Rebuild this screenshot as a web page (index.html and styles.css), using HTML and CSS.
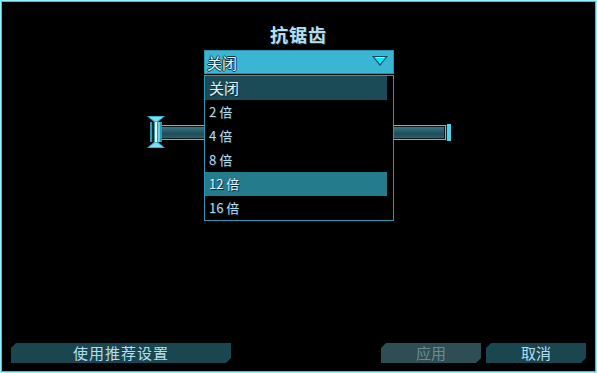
FILE: index.html
```html
<!DOCTYPE html>
<html lang="zh-CN">

<head>
    <meta charset="UTF-8">
    <title>抗锯齿</title>
    <link rel="stylesheet" href="styles.css">
</head>

<body>
    <div class="screen">
        <h1 class="title">抗锯齿</h1>

        <div class="select-wrap">
            <div class="select">
                <span>关闭</span>
                <svg class="arrow" width="18" height="12" viewBox="0 0 18 12">
                    <polygon points="1,1 17,1 9,11" fill="#0a4a5a" />
                    <polygon points="3,2 15,2 9,9" fill="#00eaff" />
                    <polygon points="4,2 14,2 13,3 5,3" fill="#8ff6ff" />
                </svg>
            </div>
            <ul class="options">
                <li class="current">关闭</li>
                <li>2 倍</li>
                <li>4 倍</li>
                <li>8 倍</li>
                <li class="hover">12 倍</li>
                <li>16 倍</li>
            </ul>
        </div>

        <!-- slider sits behind the open list -->
        <div class="slider">
            <div class="thumb">
                <svg width="18" height="32" viewBox="0 0 18 32">
                    <polygon points="0,0 18,0 11,6 7,6" fill="#3ab0cc" />
                    <polygon points="2,1 16,1 10,5 8,5" fill="#7fe0f4" />
                    <polygon points="0,32 18,32 11,26 7,26" fill="#3ab0cc" />
                    <polygon points="2,31 16,31 10,27 8,27" fill="#7fe0f4" />
                    <rect x="3" y="6" width="12" height="20" fill="#2a9ab8" />
                    <rect x="5" y="6" width="2" height="20" fill="#0a2a30" />
                    <rect x="8" y="6" width="2" height="20" fill="#ffffff" />
                    <rect x="11" y="6" width="2" height="20" fill="#5ad0ea" />
                </svg>
            </div>
            <div class="track"></div>
            <div class="cap"></div>
        </div>

        <div class="spacer"></div>

        <div class="footer">
            <button class="btn wide">使用推荐设置</button>
            <div class="right">
                <button class="btn disabled">应用</button>
                <button class="btn">取消</button>
            </div>
        </div>
    </div>
</body>

</html>
```

FILE: styles.css
```css
body {
    margin: 0;
    background-color: #000;
    font-family: "Noto Sans CJK SC", "Noto Sans", sans-serif;
}

.screen {
    width: 597px;
    height: 373px;
    box-sizing: border-box;
    border: 1px solid #8ef2ff;
    box-shadow: inset 0 0 0 1px #2cc6ee;
    background-color: #000;
    display: flex;
    flex-direction: column;
    padding: 22px 10px 9px 10px;
}

.title {
    margin: 0;
    text-align: center;
    font-size: 18px;
    line-height: 22px;
    letter-spacing: 1px;
    font-weight: bold;
    color: #b6def0;
    text-shadow: 1px 1px 0 #1a3a48;
}

.select-wrap {
    position: relative;
    width: 190px;
    margin: 5px auto 0 auto;
    padding-left: 1px;
}

.select {
    height: 24px;
    box-sizing: border-box;
    background-color: #3ab6d2;
    border: 1px solid #2894b0;
    display: flex;
    align-items: center;
    justify-content: space-between;
    padding: 0 4px 0 2px;
    color: #e8f6ff;
    font-size: 15px;
    text-shadow: 1px 0 0 #0c3440, -1px 0 0 #0c3440, 0 1px 0 #0c3440, 0 -1px 0 #0c3440;
}

.arrow {
    margin-top: -2px;
}

.options {
    position: absolute;
    left: 1px;
    top: 25px;
    width: 190px;
    box-sizing: border-box;
    margin: 0;
    padding: 0 6px 0 0;
    list-style: none;
    background-color: #000;
    border: 1px solid #2a9ab2;
    z-index: 2;
}

.options li {
    height: 24px;
    line-height: 24px;
    padding-left: 4px;
    font-size: 13px;
    color: #b6def0;
    text-shadow: 1px 1px 0 #0c2c34;
}

.options .current {
    background-color: #1a4b57;
    font-size: 15px;
    color: #e0f2fa;
}

.options .hover {
    background-color: #237b8c;
    color: #e0f2fa;
}

.slider {
    width: 304px;
    height: 32px;
    margin: 42px auto 0 auto;
    display: flex;
    align-items: center;
}

.thumb {
    width: 18px;
    height: 32px;
    margin-right: -9px;
    z-index: 1;
}

.thumb svg {
    display: block;
}

.track {
    flex: 1;
    height: 15px;
    box-sizing: border-box;
    border: 1px solid #45c8e6;
    box-shadow: inset 0 0 0 1px #0a1a1e;
    background: linear-gradient(#3f7c86, #1c4e58 60%, #2a6470);
}

.cap {
    width: 4px;
    height: 17px;
    background-color: #4ad4ef;
    border-left: 1px solid #0a2a30;
}

.spacer {
    flex: 1;
}

.footer {
    display: flex;
    justify-content: space-between;
}

.right {
    display: flex;
    gap: 5px;
}

.btn {
    width: 100px;
    height: 20px;
    padding: 0;
    border: none;
    background-color: #1a4650;
    color: #b6def0;
    font-family: "Noto Sans CJK SC", "Noto Sans", sans-serif;
    font-size: 15px;
    line-height: 20px;
    clip-path: polygon(5px 0, 100% 0, 100% calc(100% - 5px), calc(100% - 5px) 100%, 0 100%, 0 5px);
}

.btn.wide {
    width: 220px;
    letter-spacing: 1px;
}

.btn.disabled {
    background-color: #2e4e54;
    color: #6b8c92;
}
```
